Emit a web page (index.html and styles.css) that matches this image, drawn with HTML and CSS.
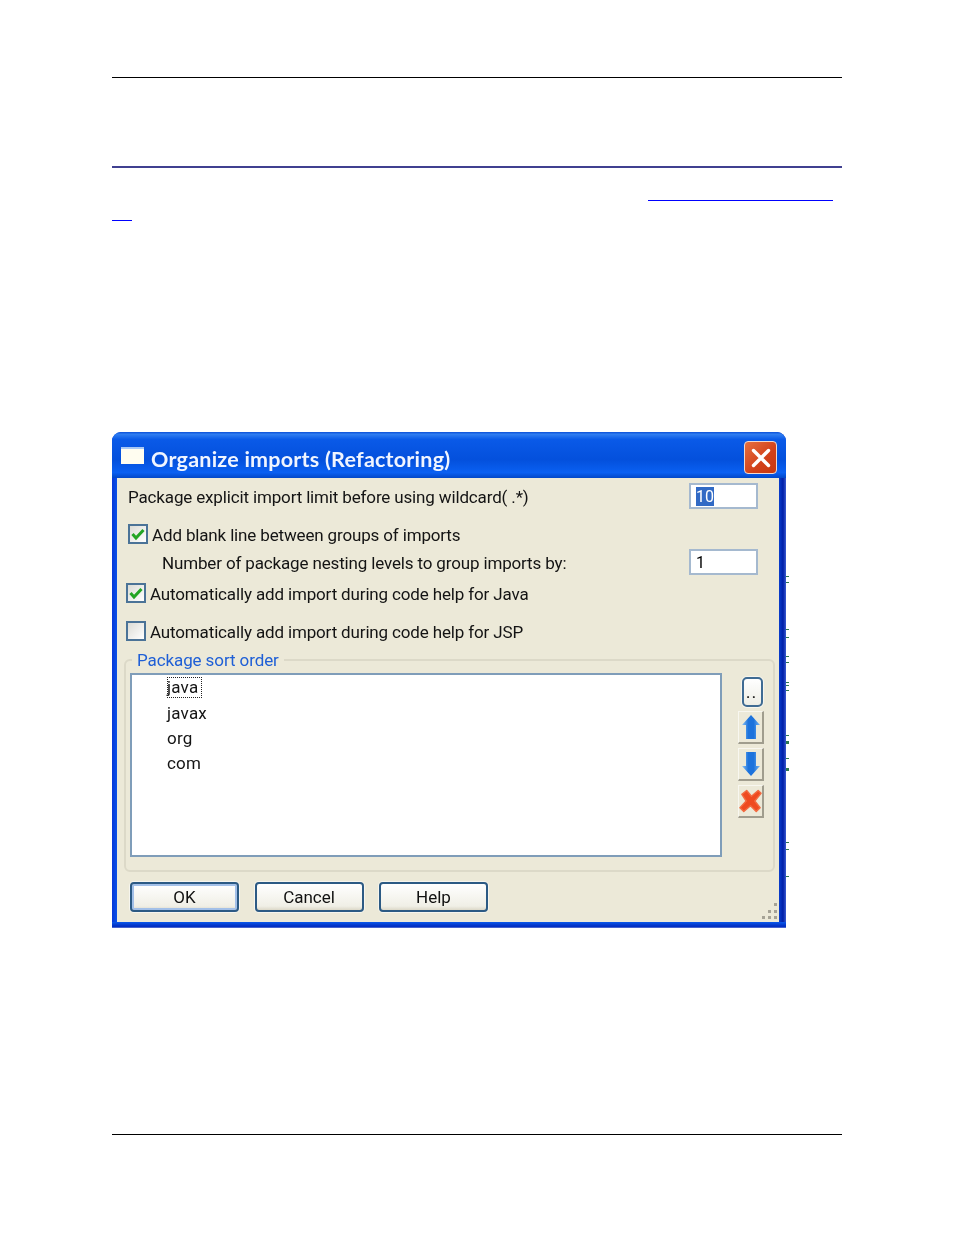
FILE: index.html
```html
<!DOCTYPE html>
<html lang="en">
<head>
<meta charset="utf-8">
<title>Organize imports</title>
<link rel="stylesheet" href="styles.css">
</head>
<body>
<div class="page">
  <div class="rule-top"></div>
  <div class="rule-section"></div>
  <div class="link-lines">
    <div class="link-a"></div>
    <div class="link-b"></div>
  </div>
  <div class="dialog">
    <div class="titlebar">
      <span class="win-icon"></span>
      <span class="title">Organize imports (Refactoring)</span>
      <span class="close"><svg width="24" height="24" viewBox="0 0 24 24"><path d="M4.500 4.500 L19.500 19.500 M19.500 4.500 L4.500 19.500" stroke="#fff" stroke-width="3.400" stroke-linecap="round"/></svg></span>
    </div>
    <div class="body">
      <div class="row r1">
        <span class="label">Package explicit import limit before using wildcard( .*)</span>
        <span class="input"><span class="sel">10</span></span>
      </div>
      <div class="row r2">
        <span class="check"><svg width="14" height="14" viewBox="0 0 14 14"><path d="M1.500 7 L5 11 L12.500 3" fill="none" stroke="#22a524" stroke-width="3"/></svg></span>
        <span class="label">Add blank line between groups of imports</span>
      </div>
      <div class="row r3">
        <span class="label">Number of package nesting levels to group imports by:</span>
        <span class="input">1</span>
      </div>
      <div class="row r4">
        <span class="check"><svg width="14" height="14" viewBox="0 0 14 14"><path d="M1.500 7 L5 11 L12.500 3" fill="none" stroke="#22a524" stroke-width="3"/></svg></span>
        <span class="label">Automatically add import during code help for Java</span>
      </div>
      <div class="row r5">
        <span class="check"></span>
        <span class="label">Automatically add import during code help for JSP</span>
      </div>
      <div class="group">
        <span class="legend">Package sort order</span>
        <div class="list">
          <div class="item"><span class="focus">java</span></div>
          <div class="item">javax</div>
          <div class="item">org</div>
          <div class="item">com</div>
        </div>
        <div class="tools">
          <span class="dots">..</span>
          <span class="tool"><svg width="20" height="26" viewBox="0 0 20 26"><defs><linearGradient id="ga" x1="0" x2="1" y1="0" y2="0"><stop offset="0" stop-color="#8cc4f5"/><stop offset=".35" stop-color="#1d73dc"/><stop offset=".65" stop-color="#1d73dc"/><stop offset="1" stop-color="#7ab8f2"/></linearGradient></defs><path d="M10 1 L19 11 L15 11 L15 25 L5 25 L5 11 L1 11 Z" fill="url(#ga)"/></svg></span>
          <span class="tool"><svg width="20" height="26" viewBox="0 0 20 26"><path d="M10 25 L19 15 L15 15 L15 1 L5 1 L5 15 L1 15 Z" fill="url(#ga)"/></svg></span>
          <span class="tool"><svg width="24" height="24" viewBox="0 0 24 24"><path d="M3 5 L8 1 L13 7 L20 1 L23 4 L16.500 12 L22 19 L18 23 L12 17 L5 23 L1 19 L7.500 12 Z" fill="#ef4a20" stroke="#f26a40" stroke-linejoin="round" stroke-width="1.500"/></svg></span>
        </div>
      </div>
      <div class="buttons">
        <span class="btn default">OK</span>
        <span class="btn">Cancel</span>
        <span class="btn">Help</span>
        <span class="grip"><svg width="18" height="18" viewBox="0 0 18 18" fill="#a6a396"><rect x="12" y="0" width="3" height="3"/><rect x="6" y="7" width="3" height="3"/><rect x="12" y="7" width="3" height="3"/><rect x="0" y="13" width="3" height="3"/><rect x="6" y="13" width="3" height="3"/><rect x="12" y="13" width="3" height="3"/></svg></span>
      </div>
    </div>
    <svg class="ticks" width="3" height="496" viewBox="0 0 3 496" fill="#2e7a50"><rect y="144" width="3" height="1"/><rect y="150" width="3" height="1"/><rect y="197" width="3" height="1"/><rect y="205" width="3" height="1"/><rect y="224" width="3" height="1"/><rect y="230" width="3" height="1"/><rect y="250" width="3" height="1"/><rect y="253" width="3" height="1"/><rect y="258" width="3" height="1"/><rect y="303" width="3" height="1"/><rect y="309" width="3" height="3"/><rect y="326" width="3" height="1"/><rect y="336" width="3" height="3"/><rect y="410" width="3" height="1"/><rect y="417" width="3" height="1"/><rect y="444" width="3" height="1"/></svg>
  </div>
  <div class="rule-bottom"></div>
</div>
</body>
</html>
```
FILE: styles.css
```css
html, body { margin: 0; padding: 0; background: #fff; }
.page { width: 730px; height: 1235px; margin-left: 112px; display: flex; flex-direction: column; }
.rule-top { height: 1px; margin-top: 77px; background: #000; }
.rule-section { height: 2px; margin-top: 88px; background: #404090; }
.link-lines { height: 54px; margin-top: 32px; }
.link-a { height: 1px; margin-left: 536px; width: 185px; background: #00f; }
.link-b { height: 1px; margin-top: 19px; width: 20px; background: #00f; }
.dialog {
  position: relative; flex: none;
  width: 674px; height: 496px; margin-top: 178px; box-sizing: border-box;
  border-radius: 9px 9px 0 0;
  background:
    linear-gradient(#0a58ea, #0230c4 4px, #0230c4 5px, #8a96d8) bottom / 100% 6px no-repeat,
    linear-gradient(90deg, #0638d8 0, #0a50e8 5px, #0a3ecc 667px, #001fa8 671px, #3a5ad0 674px);
  display: flex; flex-direction: column;
  font-family: Roboto, "Noto Sans", sans-serif; font-size: 17px; color: #141414;
  padding: 0 7px 6px 5px;
}
.titlebar, .body { filter: blur(.4px); }
.titlebar {
  height: 46px; box-sizing: border-box; margin: 0 -7px 0 -5px; padding: 5px 9px 0 9px; flex: none; display: flex; align-items: center;
  border-radius: 9px 9px 0 0;
  background: linear-gradient(#0a4fd8 0, #2f7df0 5%, #0a5ae8 16%, #0450dc 60%, #0a60f2 88%, #0247c8 100%);
}
.win-icon { width: 23px; height: 17px; margin-top: -4px; background: #fffdf0; border-top: 2px solid #a9c8f5; box-sizing: border-box; }
.title { margin: 3px 0 0 7px; font: bold 21.500px Lato, sans-serif; letter-spacing: .23px; color: #f0f5ff; flex: 1; white-space: nowrap; }
.close {
  width: 33px; height: 33px; box-sizing: border-box; border: 1px solid #f1d9cf; border-radius: 4px;
  background: linear-gradient(135deg, #e6703f, #d2401a 60%, #c8380f);
  display: flex; align-items: center; justify-content: center;
}
.body { flex: 1; background: #ece9d8; position: relative; }
.row { display: flex; align-items: center; white-space: nowrap; position: relative; }
.label { padding-top: 2px; letter-spacing: -.15px; }
.r1 { height: 26px; margin-top: 5px; padding-left: 11px; }
.r2 { height: 26px; margin-top: 12px; padding-left: 11px; }
.r3 { height: 26px; margin-top: 2px; padding-left: 45px; }
.r4 { height: 24px; margin-top: 6px; padding-left: 9px; }
.r5 { height: 24px; margin-top: 14px; padding-left: 9px; }
.input {
  position: absolute; left: 572px; top: 0; width: 69px; height: 26px; box-sizing: border-box;
  border: 2px solid #a5b9cf; background: #fff; padding-left: 5px; line-height: 24px; font-size: 16px; color: #000;
}
.sel { background: #316ac5; color: #fff; display: inline-block; width: 18px; line-height: 20px; height: 19px; margin-top: 2px; vertical-align: top; }
.check {
  width: 20px; height: 20px; box-sizing: border-box; border: 2px solid #4b7397; margin-right: 4px;
  background: linear-gradient(135deg, #dcdcd6, #fff); display: flex; align-items: center; justify-content: center;
}
.group {
  position: relative; height: 213px; width: 651px; box-sizing: border-box; margin: 16px 0 0 7px;
  border: 2px solid #dcd9c8; border-radius: 6px;
}
.legend { position: absolute; left: 6px; top: -11px; padding: 0 5px; background: #ece9d8; color: #1f5fd6; line-height: 20px; letter-spacing: -.1px; }
.list {
  position: absolute; left: 4px; top: 12px; width: 592px; height: 184px; box-sizing: border-box;
  border: 2px solid #7f9db9; background: #fff; padding-left: 35px; letter-spacing: .2px;
}
.item { height: 25px; line-height: 27px; }
.focus { display: inline-block; width: 35px; height: 21px; line-height: 21px; vertical-align: top; margin-top: 2px; outline: 1px dotted #222; outline-offset: -1px; }
.tools { position: absolute; left: 610px; top: 16px; display: flex; flex-direction: column; align-items: center; width: 30px; gap: 4px; }
.dots {
  width: 21px; height: 30px; margin-left: 2px; box-sizing: border-box; border: 2px solid #3f6b93; border-radius: 5px;
  box-shadow: 0 0 0 1px #f6f5ee;
  background: linear-gradient(#fff, #eeeee6); font-weight: bold; font-size: 13px; letter-spacing: 2px; text-align: center; line-height: 30px;
}
.tool {
  width: 26px; height: 33px; box-sizing: border-box; background: #ece9d8; display: flex; align-items: center; justify-content: center;
  border-style: solid; border-color: #f8f7f0 #a09d8e #a09d8e #f8f7f0; border-width: 1px 2px 2px 1px;
}
.buttons { display: flex; gap: 15.500px; margin: 10px 0 0 13px; position: relative; }
.btn {
  width: 109px; height: 30px; box-sizing: border-box; border: 2px solid #2c5a84; border-radius: 4px;
  box-shadow: 0 0 0 1px #f6f5ee;
  background: linear-gradient(#fff, #f0efe6 85%, #dcd8c8); text-align: center; line-height: 26px; color: #111;
}
.default { box-shadow: 0 0 0 1px #f6f5ee, inset 0 0 0 2px #a3c0e8; }
.grip { position: absolute; left: 632px; top: 21px; }
.ticks { position: absolute; left: 674px; top: 0; }
.rule-bottom { height: 1px; margin-top: 206px; background: #000; }
```
